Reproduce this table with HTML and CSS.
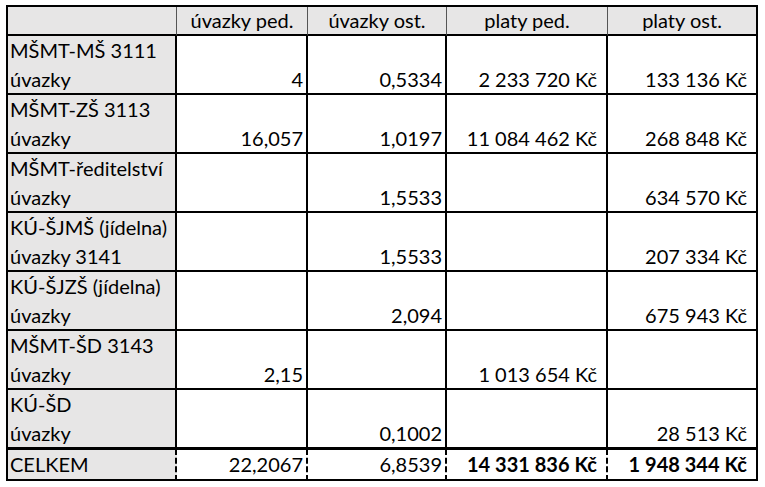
FILE: index.html
```html
<!DOCTYPE html>
<html lang="cs">
<head>
    <meta charset="UTF-8">
    <title>Úvazky a platy</title>
    <link rel="stylesheet" href="styles.css">
</head>
<body>
    <table class="sheet">
        <colgroup>
            <col class="c-label">
            <col class="c-ped">
            <col class="c-ost">
            <col class="c-plped">
            <col class="c-plost">
        </colgroup>
        <thead>
            <tr>
                <th class="label"></th>
                <th>úvazky ped.</th>
                <th>úvazky ost.</th>
                <th>platy ped.</th>
                <th>platy ost.</th>
            </tr>
        </thead>
        <tbody>
            <tr>
                <td class="label">MŠMT-MŠ 3111<br>úvazky</td>
                <td class="num">4</td>
                <td class="num">0,5334</td>
                <td class="money">2 233 720 Kč</td>
                <td class="money">133 136 Kč</td>
            </tr>
            <tr>
                <td class="label">MŠMT-ZŠ 3113<br>úvazky</td>
                <td class="num">16,057</td>
                <td class="num">1,0197</td>
                <td class="money">11 084 462 Kč</td>
                <td class="money">268 848 Kč</td>
            </tr>
            <tr>
                <td class="label">MŠMT-ředitelství<br>úvazky</td>
                <td class="num"></td>
                <td class="num">1,5533</td>
                <td class="money"></td>
                <td class="money">634 570 Kč</td>
            </tr>
            <tr>
                <td class="label">KÚ-ŠJMŠ (jídelna)<br>úvazky 3141</td>
                <td class="num"></td>
                <td class="num">1,5533</td>
                <td class="money"></td>
                <td class="money">207 334 Kč</td>
            </tr>
            <tr>
                <td class="label">KÚ-ŠJZŠ (jídelna)<br>úvazky</td>
                <td class="num"></td>
                <td class="num">2,094</td>
                <td class="money"></td>
                <td class="money">675 943 Kč</td>
            </tr>
            <tr>
                <td class="label">MŠMT-ŠD 3143<br>úvazky</td>
                <td class="num">2,15</td>
                <td class="num"></td>
                <td class="money">1 013 654 Kč</td>
                <td class="money"></td>
            </tr>
            <tr>
                <td class="label">KÚ-ŠD<br>úvazky</td>
                <td class="num"></td>
                <td class="num">0,1002</td>
                <td class="money"></td>
                <td class="money">28 513 Kč</td>
            </tr>
        </tbody>
        <tfoot>
            <tr>
                <td class="label">CELKEM</td>
                <td class="num">22,2067</td>
                <td class="num">6,8539</td>
                <td class="money bold">14 331 836 Kč</td>
                <td class="money bold">1 948 344 Kč</td>
            </tr>
        </tfoot>
    </table>
</body>
</html>
```

FILE: styles.css
```css
body {
    margin: 0;
    background: #fff;
    font-family: Lato, "Liberation Sans", sans-serif;
    font-size: 20px;
    color: #000;
}
.sheet {
    margin: 5px 0 0 6px;
    width: 752px;
    table-layout: fixed;
    border-collapse: separate;
    border-spacing: 0;
    border-top: 2px solid #000;
    border-left: 2px solid #000;
}
.c-label { width: 169px; }
.c-ped { width: 131px; }
.c-ost { width: 139px; }
.c-plped { width: 161px; }
.c-plost { width: 150px; }

.sheet th,
.sheet td {
    box-sizing: border-box;
    padding: 0 3px;
    border-right: 2px solid #000;
    border-bottom: 2px solid #000;
    white-space: nowrap;
    overflow: hidden;
}
.sheet th {
    height: 29px;
    line-height: 27px;
    font-weight: normal;
    text-align: center;
    background: #e7e6e6;
    border-right: 1px solid #555;
}
.sheet thead th:last-child {
    border-right: 2px solid #000;
}
.sheet tbody td {
    height: 59px;
    line-height: 28.5px;
    vertical-align: bottom;
}
.sheet .label {
    text-align: left;
    background: #e7e6e6;
    padding-left: 2px;
}
.num {
    text-align: right;
    padding-right: 2px;
}
.money {
    text-align: right;
    padding-right: 9px !important;
}
.bold {
    font-weight: bold;
}
.sheet tfoot td {
    height: 32px;
    line-height: 27px;
    border-top: 1px solid #000;
    border-right: 2px dashed #000;
}
.sheet tfoot td:last-child {
    border-right: 2px solid #000;
}
```
